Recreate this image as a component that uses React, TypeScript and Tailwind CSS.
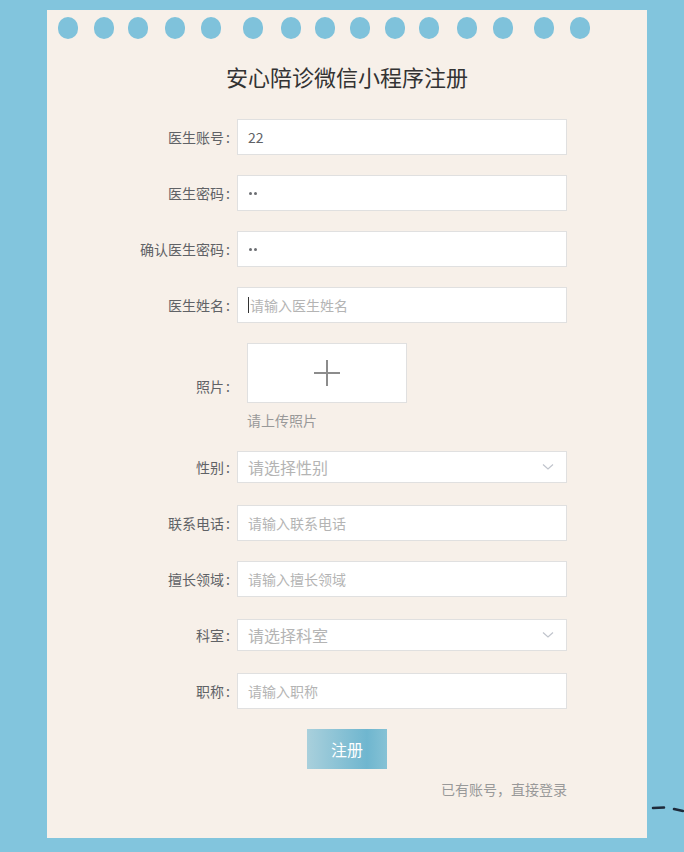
import React from "react";

const font = { fontFamily: '"Noto Sans CJK SC", "Noto Sans", sans-serif' };

function Label({ text }: { text: string }) {
  return (
    <div className="w-[190px] shrink-0 pr-[7px] text-right text-[14px] text-[#606266]">
      {text}
      <span className="ml-[2px]">:</span>
    </div>
  );
}

function Chevron() {
  return (
    <svg width="12" height="8" viewBox="0 0 12 8" className="absolute right-[12px] top-1/2 -translate-y-1/2">
      <path d="M1 1.5 L6 6 L11 1.5" fill="none" stroke="#c0c4cc" strokeWidth="1.2" />
    </svg>
  );
}

function Dots() {
  return (
    <div className="flex h-[36px] w-[330px] items-center gap-[2px] border border-[#e0e0e0] bg-white pl-[11px]">
      <span className="h-[3px] w-[3px] rounded-full bg-[#6b6d72]" />
      <span className="h-[3px] w-[3px] rounded-full bg-[#6b6d72]" />
    </div>
  );
}

export default function App() {
  return (
    <div
      className="relative h-[852px] w-[684px] overflow-hidden bg-[#82c5dd] pl-[47px] pt-[10px]"
      style={font}
    >
      <div className="h-[828px] w-[600px] bg-[#f7f0e9]">
        {/* rings */}
        <div className="flex pt-[7px]">
          <div className="ml-[11px] h-[22px] w-[20px] rounded-full bg-[#7fc2db]" />
          <div className="ml-[16px] h-[22px] w-[20px] rounded-full bg-[#7fc2db]" />
          <div className="ml-[14px] h-[22px] w-[20px] rounded-full bg-[#7fc2db]" />
          <div className="ml-[17px] h-[22px] w-[20px] rounded-full bg-[#7fc2db]" />
          <div className="ml-[16px] h-[22px] w-[20px] rounded-full bg-[#7fc2db]" />
          <div className="ml-[22px] h-[22px] w-[20px] rounded-full bg-[#7fc2db]" />
          <div className="ml-[18px] h-[22px] w-[20px] rounded-full bg-[#7fc2db]" />
          <div className="ml-[14px] h-[22px] w-[20px] rounded-full bg-[#7fc2db]" />
          <div className="ml-[15px] h-[22px] w-[20px] rounded-full bg-[#7fc2db]" />
          <div className="ml-[15px] h-[22px] w-[20px] rounded-full bg-[#7fc2db]" />
          <div className="ml-[14px] h-[22px] w-[20px] rounded-full bg-[#7fc2db]" />
          <div className="ml-[18px] h-[22px] w-[20px] rounded-full bg-[#7fc2db]" />
          <div className="ml-[16px] h-[22px] w-[20px] rounded-full bg-[#7fc2db]" />
          <div className="ml-[21px] h-[22px] w-[20px] rounded-full bg-[#7fc2db]" />
          <div className="ml-[16px] h-[22px] w-[20px] rounded-full bg-[#7fc2db]" />
        </div>

        <h1 className="mt-[22px] h-[30px] text-center text-[22px] leading-[30px] text-[#333333]">
          安心陪诊微信小程序注册
        </h1>

        <div className="mt-[28px] flex flex-col">
          {/* account */}
          <div className="flex h-[36px] items-center">
            <Label text="医生账号" />
            <div className="flex h-[36px] w-[330px] items-center border border-[#e0e0e0] bg-white pl-[10px] text-[14px] text-[#606266]">
              22
            </div>
          </div>
          {/* password */}
          <div className="mt-[20px] flex h-[36px] items-center">
            <Label text="医生密码" />
            <Dots />
          </div>
          <div className="mt-[20px] flex h-[36px] items-center">
            <Label text="确认医生密码" />
            <Dots />
          </div>
          {/* name */}
          <div className="mt-[20px] flex h-[36px] items-center">
            <Label text="医生姓名" />
            <div className="flex h-[36px] w-[330px] items-center border border-[#e0e0e0] bg-white pl-[10px] text-[14px] text-[#b4b4b4]">
              <span className="mr-[1px] h-[16px] w-[1px] bg-[#333]" />
              请输入医生姓名
            </div>
          </div>
          {/* photo */}
          <div className="mt-[20px] flex items-center">
            <Label text="照片" />
            <div className="flex flex-col pl-[10px]">
              <div className="flex h-[60px] w-[160px] items-center justify-center border border-[#e0e0e0] bg-white">
                <svg width="28" height="28" viewBox="0 0 28 28">
                  <path d="M14 1 V27 M1 14 H27" stroke="#8c8c8c" strokeWidth="2" />
                </svg>
              </div>
              <div className="mt-[7px] h-[20px] text-[14px] leading-[20px] text-[#999999]">请上传照片</div>
            </div>
          </div>
          {/* gender */}
          <div className="mt-[21px] flex h-[32px] items-center">
            <Label text="性别" />
            <div className="relative flex h-[32px] w-[330px] items-center border border-[#e0e0e0] bg-white pl-[10px] text-[16px] text-[#b4b4b4]">
              请选择性别
              <Chevron />
            </div>
          </div>
          {/* phone */}
          <div className="mt-[22px] flex h-[36px] items-center">
            <Label text="联系电话" />
            <div className="flex h-[36px] w-[330px] items-center border border-[#e0e0e0] bg-white pl-[10px] text-[14px] text-[#b4b4b4]">
              请输入联系电话
            </div>
          </div>
          {/* specialty */}
          <div className="mt-[20px] flex h-[36px] items-center">
            <Label text="擅长领域" />
            <div className="flex h-[36px] w-[330px] items-center border border-[#e0e0e0] bg-white pl-[10px] text-[14px] text-[#b4b4b4]">
              请输入擅长领域
            </div>
          </div>
          {/* dept */}
          <div className="mt-[22px] flex h-[32px] items-center">
            <Label text="科室" />
            <div className="relative flex h-[32px] w-[330px] items-center border border-[#e0e0e0] bg-white pl-[10px] text-[16px] text-[#b4b4b4]">
              请选择科室
              <Chevron />
            </div>
          </div>
          {/* title */}
          <div className="mt-[22px] flex h-[36px] items-center">
            <Label text="职称" />
            <div className="flex h-[36px] w-[330px] items-center border border-[#e0e0e0] bg-white pl-[10px] text-[14px] text-[#b4b4b4]">
              请输入职称
            </div>
          </div>
          {/* button */}
          <div className="mt-[20px] flex justify-center">
            <div className="flex h-[40px] w-[80px] items-center justify-center bg-[linear-gradient(to_right,#a9d0dc,#6fb6cf_75%,#86c2d5)] text-[16px] text-white">
              注册
            </div>
          </div>
          <div className="mt-[10px] h-[20px] pr-[80px] text-right text-[14px] leading-[20px] text-[#999999]">
            已有账号，直接登录
          </div>
        </div>
      </div>

      <svg className="absolute left-[650px] top-[803px]" width="34" height="12" viewBox="0 0 34 12">
        <path d="M3 5 L14 4.5" stroke="#1e2a3a" strokeWidth="2.5" strokeLinecap="round" />
        <path d="M24 6 L33 8" stroke="#1e2a3a" strokeWidth="2.5" strokeLinecap="round" />
      </svg>
    </div>
  );
}
